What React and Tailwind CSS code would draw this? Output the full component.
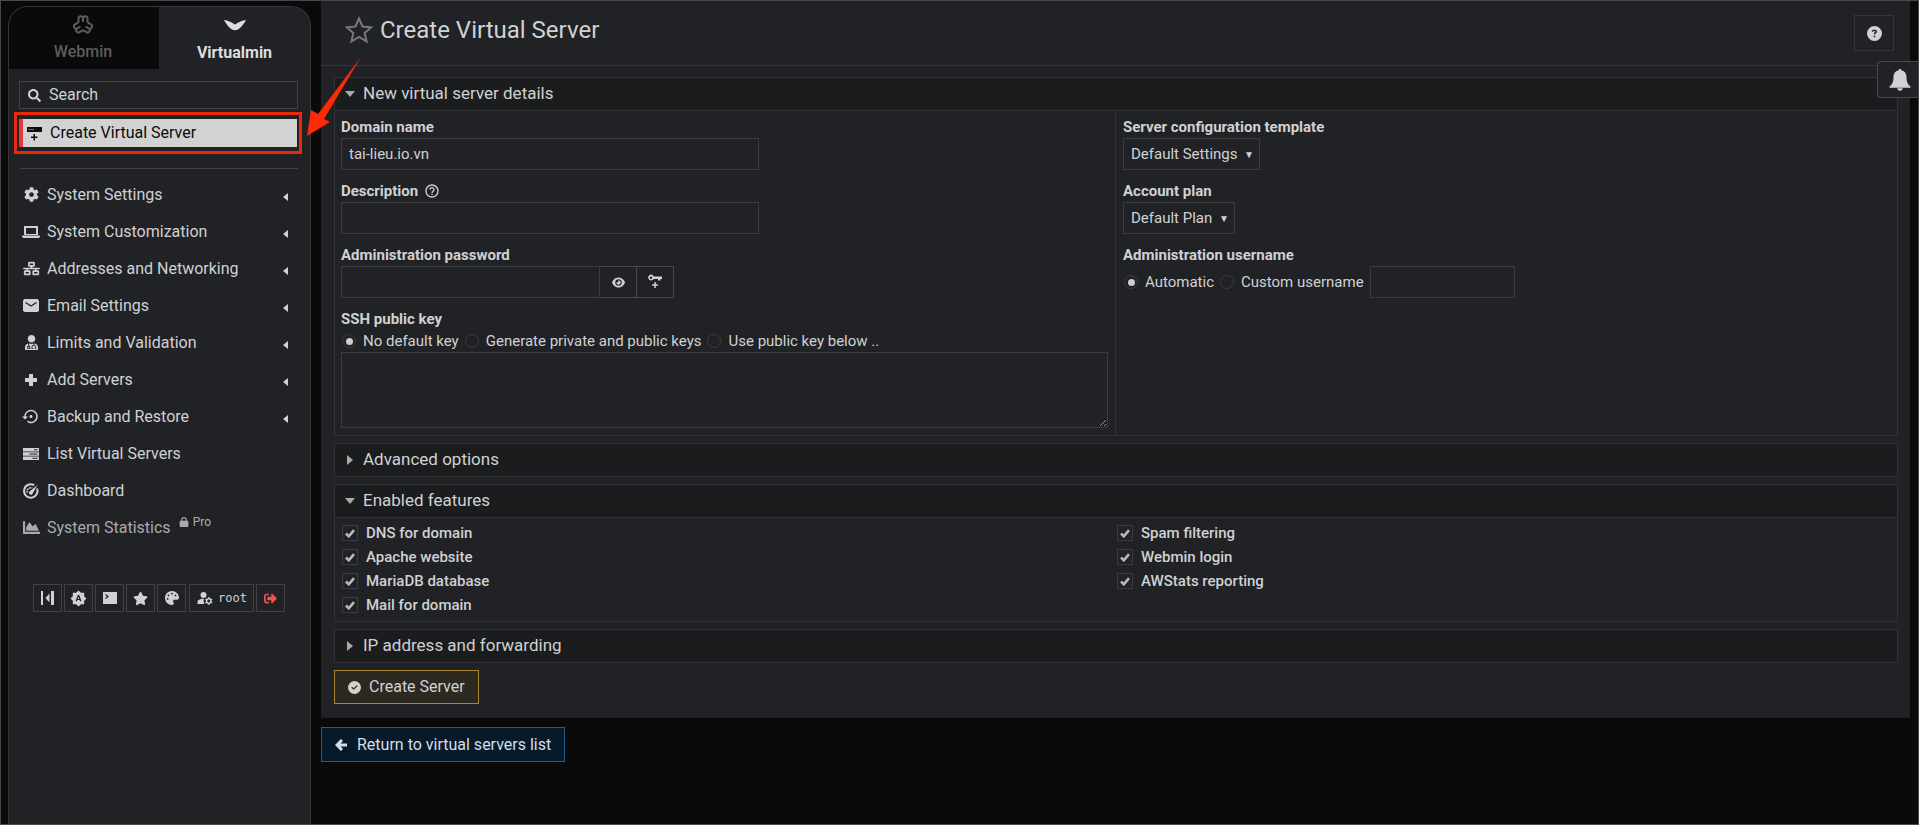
import React, { useState } from "react";
import {
  FaCircleCheck,
  FaCircleQuestion,
  FaEye,
  FaLock,
  FaNetworkWired,
  FaPalette,
  FaStar,
} from "react-icons/fa6";
import { FaChartArea, FaCog, FaSearch, FaSignOutAlt, FaUserMd } from "react-icons/fa";
import {
  MdBrightnessAuto,
  MdHelpOutline,
  MdManageAccounts,
  MdSettingsBackupRestore,
} from "react-icons/md";

const WebminIcon = () => (
  <svg viewBox="-10 -10 20 20" className="h-5 w-5" fill="none" stroke="currentColor" strokeWidth="2" aria-hidden="true">
    <path d="M-4.500-2.600v-4a2.250 2.250 0 0 1 4.500 0v3.600M0-3v-3.600a2.250 2.250 0 0 1 4.500 0v4" />
    <path d="M-4.500-2.600v-4a2.250 2.250 0 0 1 4.500 0v3.600M0-3v-3.600a2.250 2.250 0 0 1 4.500 0v4" transform="rotate(120)" />
    <path d="M-4.500-2.600v-4a2.250 2.250 0 0 1 4.500 0v3.600M0-3v-3.600a2.250 2.250 0 0 1 4.500 0v4" transform="rotate(240)" />
  </svg>
);

const VirtualminIcon = () => (
  <svg viewBox="0 0 22 12" className="h-3 w-[22px]" fill="currentColor" aria-hidden="true">
    <path d="M0 1c4 .5 7 1.800 11 4.500C15 2.800 18 1.500 22 1c-2 4-5.500 8-8 9.500-2 1-4 1-6 0C5.500 9 2 5 0 1z" />
  </svg>
);

const ServerPlusIcon = () => (
  <svg viewBox="0 0 15 15" className="h-[15px] w-[15px]" fill="currentColor" aria-hidden="true">
    <path fillRule="evenodd" d="M0 1h15v5H0zM1.500 3v1h1V3zM3.500 3v1h1V3zM5.500 3v1h1V3z" />
    <path d="M6.500 8H8v2.500h2.500V12H8v2.500H6.500V12H4v-1.500h2.500z" />
  </svg>
);

const LaptopIcon = () => (
  <svg viewBox="0 0 18 12" className="h-3 w-[18px]" fill="currentColor" aria-hidden="true">
    <path fillRule="evenodd" d="M2 0h14v9H2zM4 2v6h10V2zM0 9.500h18v1L17 12H1l-1-1.500z" />
  </svg>
);

const MailIcon = () => (
  <svg viewBox="0 0 16 13" className="h-[13px] w-4" aria-hidden="true">
    <path d="M1.500 0h13L16 1.500v10L14.500 13h-13L0 11.500v-10z" fill="currentColor" />
    <path d="m2.500 3.500 5.500 3.500 5.500-3.500" fill="none" stroke="#202226" strokeWidth="1.200" />
  </svg>
);

const PlusIcon = () => (
  <svg viewBox="0 0 14 14" className="h-[14px] w-[14px]" fill="currentColor" aria-hidden="true">
    <path d="M5 1h4v4h4v4H9v4H5V9H1V5h4z" />
  </svg>
);

const ServersIcon = () => (
  <svg viewBox="0 0 16 14" className="h-[14px] w-4" fill="currentColor" aria-hidden="true">
    <path fillRule="evenodd" d="M0 1h16v3.500H0zM11 2.200v1h3.500v-1zM0 5.300h16v3.500H0zM6.500 6.500v1h8v-1zM0 9.600h16v3.500H0zM9.500 10.800v1h5v-1z" />
  </svg>
);

const GaugeIcon = () => (
  <svg viewBox="0 0 16 16" className="h-4 w-4" fill="none" stroke="currentColor" aria-hidden="true">
    <path d="M14 5.500A6.700 6.700 0 1 1 11.200 2.200" strokeWidth="2" />
    <path d="M4.200 9.500a4 4 0 0 1 5-4.700" strokeWidth="1.500" strokeDasharray="1.800 .7" />
    <path d="M14.500 2 9.800 10.300A2 2 0 1 1 7 8z" fill="currentColor" stroke="none" />
  </svg>
);

const KeyPlusIcon = () => (
  <svg viewBox="0 0 16 16" className="h-4 w-4" fill="currentColor" aria-hidden="true">
    <path fillRule="evenodd" d="M4 .5a3 3 0 0 1 2.800 2H15V5h-1.500v1.500H11V5H6.800A3 3 0 1 1 4 .5zm0 2a1.200 1.200 0 1 0 0 2.400 1.200 1.200 0 0 0 0-2.400z" />
    <path d="M7.300 8h1.500v2.200H11v1.500H8.800v2.200H7.300v-2.200H5.100v-1.500h2.200z" />
  </svg>
);

const CollapseIcon = () => (
  <svg viewBox="0 0 14 14" className="h-[14px] w-[14px]" fill="currentColor" aria-hidden="true">
    <path d="M0 0h2v14H0zM10 0h3v14h-3zM8.500 2.500v9L4.500 7z" />
  </svg>
);

const TerminalIcon = () => (
  <svg viewBox="0 0 14 12" className="h-3 w-[14px]" aria-hidden="true">
    <path d="M0 0h14v12H0z" fill="currentColor" />
    <path d="m2.500 2.500 2.500 2-2.500 2" fill="none" stroke="#202226" strokeWidth="1.200" />
  </svg>
);

const BackIcon = () => (
  <svg viewBox="0 0 12 12" className="h-3 w-3" fill="none" stroke="currentColor" strokeWidth="3" aria-hidden="true">
    <path d="M12 6H2.500M7 1 2 6l5 5" />
  </svg>
);

const BellIcon = () => (
  <svg viewBox="0 0 22 22" className="h-[22px] w-[22px]" fill="currentColor" aria-hidden="true">
    <path d="M11 0a1.500 1.500 0 0 1 1.500 1.600C16 2.300 17.500 5 17.500 8c0 5 1.500 7.500 4 9.500v1.200H.5v-1.200c2.500-2 4-4.500 4-9.500 0-3 1.500-5.700 5-6.400A1.500 1.500 0 0 1 11 0zM8.300 19.200h5.400a2.700 2.500 0 0 1-5.400 0z" />
  </svg>
);

const menu = [
  { label: "System Settings", icon: <FaCog size={15} />, sub: true },
  { label: "System Customization", icon: <LaptopIcon />, sub: true },
  { label: "Addresses and Networking", icon: <FaNetworkWired size={17} />, sub: true },
  { label: "Email Settings", icon: <MailIcon />, sub: true },
  { label: "Limits and Validation", icon: <FaUserMd size={15} />, sub: true },
  { label: "Add Servers", icon: <PlusIcon />, sub: true },
  { label: "Backup and Restore", icon: <MdSettingsBackupRestore size={19} />, sub: true },
  { label: "List Virtual Servers", icon: <ServersIcon /> },
  { label: "Dashboard", icon: <GaugeIcon /> },
  { label: "System Statistics", icon: <FaChartArea size={17} />, pro: true },
];

const tools = [
  { label: "Collapse menu", icon: <CollapseIcon /> },
  { label: "Night mode", icon: <MdBrightnessAuto size={17} /> },
  { label: "Terminal", icon: <TerminalIcon /> },
  { label: "Favorites", icon: <FaStar size={15} /> },
  { label: "Theme", icon: <FaPalette size={14} /> },
];

function Sidebar() {
  return (
    <aside className="mt-[5px] ml-[7px] flex w-[303px] shrink-0 flex-col overflow-hidden rounded-t-[20px] border border-b-0 border-[#34363a] bg-[#202226]">
      <div className="flex h-[62px]">
        <button className="flex w-[150px] flex-col items-center bg-[#0a0a0a] pt-2 pr-[2px] font-medium text-[#5c5d5e]">
          <WebminIcon />
          <span className="mt-[5px]">Webmin</span>
        </button>
        <button className="flex flex-1 flex-col items-center pt-3 font-bold text-[#dcdddf]">
          <VirtualminIcon />
          <span className="mt-[10px]">Virtualmin</span>
        </button>
      </div>

      <div className="mt-3 mr-3 ml-[10px] flex h-[28px] items-center gap-2 border border-[#404246] px-2">
        <FaSearch size={13} className="shrink-0" />
        <input
          type="text"
          aria-label="Search"
          placeholder="Search"
          className="w-full min-w-0 bg-transparent outline-none placeholder:text-[#d0d1d3]"
        />
      </div>

      <div className="mt-[3px] mr-2 ml-[5px] border-3 border-[#e8290b] px-[2px] py-1">
        <a
          href="#create"
          className="flex h-7 items-center gap-2 border-l-4 border-[#e8383d] bg-[#d2d2d3] pl-1 text-[#0c0c0d]"
        >
          <ServerPlusIcon />
          Create Virtual Server
        </a>
      </div>

      <hr className="mt-[14px] mr-3 ml-[11px] border-[#404246]" />

      <nav className="mt-[7px]">
        {menu.map((item) => (
          <a
            key={item.label}
            href="#menu"
            className={`flex h-[37px] items-center pr-[22px] pl-[13px] ${item.pro ? "text-[#a9aaac]" : ""}`}
          >
            <span className="flex w-[18px] justify-center">{item.icon}</span>
            <span className="ml-[7px]">{item.label}</span>
            {item.pro && (
              <span className="mb-3 ml-2 flex items-center gap-1 text-xs">
                <FaLock size={10} />
                Pro
              </span>
            )}
            {item.sub && (
              <svg viewBox="0 0 5 8" className="mt-1 ml-auto h-2 w-[5px]" fill="currentColor" aria-hidden="true">
                <path d="M5 0v8L0 4z" />
              </svg>
            )}
          </a>
        ))}
      </nav>

      <div className="mt-[38px] ml-6 flex gap-[2px]">
        {tools.map((tool) => (
          <button
            key={tool.label}
            aria-label={tool.label}
            className="flex h-7 w-[29px] items-center justify-center border border-[#404246]"
          >
            {tool.icon}
          </button>
        ))}
        <button className="ml-[1px] flex h-7 items-center gap-1 border border-[#404246] px-[6px] font-['DejaVu_Sans_Mono',monospace] text-xs">
          <MdManageAccounts size={18} />
          root
        </button>
        <button
          aria-label="Logout"
          className="flex h-7 w-[29px] items-center justify-center border border-[#404246] text-[#e8564e]"
        >
          <FaSignOutAlt size={13} />
        </button>
      </div>
    </aside>
  );
}

function Panel({ title, open, children }) {
  return (
    <section className="border border-[#303236]">
      <button type="button" className="flex h-8 w-full items-center bg-[#1b1c1e] pl-2 text-left text-[17px]">
        <span className="mr-[7px] flex w-[13px] justify-center text-[#a9aaac]">
          <svg viewBox="0 0 10 10" className="h-[10px] w-[10px]" fill="currentColor" aria-hidden="true">
            {open ? <path d="M0 2h10L5 8z" /> : <path d="M2 0v10l6-5z" />}
          </svg>
        </span>
        {title}
      </button>
      {open && <div className="border-t border-[#303236]">{children}</div>}
    </section>
  );
}

function Radio({ name, label, ...props }) {
  return (
    <label className="flex items-center gap-[7px]">
      <input
        type="radio"
        name={name}
        className="flex h-[14px] w-[14px] appearance-none items-center justify-center rounded-full border border-[#3a3c40] before:h-[7px] before:w-[7px] before:rounded-full checked:before:bg-[#cdced0]"
        {...props}
      />
      {label}
    </label>
  );
}

function Select({ id, value }) {
  return (
    <div className="grid h-8 w-fit items-center">
      <select
        id={id}
        className="col-start-1 row-start-1 h-8 appearance-none border border-[#3a3c40] bg-[#202226] pr-[21px] pl-[7px] outline-none"
      >
        <option>{value}</option>
      </select>
      <span className="pointer-events-none col-start-1 row-start-1 mr-[6px] justify-self-end text-[10px]">▼</span>
    </div>
  );
}

function Feature({ label }) {
  const [on, setOn] = useState(true);

  return (
    <label className="flex h-6 items-center gap-2 font-medium">
      <span className="grid h-4 w-4 place-items-center">
        <input
          type="checkbox"
          checked={on}
          onChange={() => setOn(!on)}
          className="col-start-1 row-start-1 h-4 w-4 appearance-none border border-[#3a3c40]"
        />
        {on && (
          <svg viewBox="0 0 10 9" className="pointer-events-none col-start-1 row-start-1 h-[9px] w-[10px]" aria-hidden="true">
            <path d="m1 4.500 2.800 2.800L9 1.200" fill="none" stroke="#b9babc" strokeWidth="2.600" />
          </svg>
        )}
      </span>
      {label}
    </label>
  );
}

function ServerDetails() {
  const labelClass = "flex h-[22px] items-center gap-[6px] font-bold";
  const inputClass = "h-8 border border-[#3a3c40] bg-transparent px-[7px] outline-none";

  return (
    <div className="grid grid-cols-2 text-[15px]">
      <div className="flex flex-col border-r border-[#303236] pt-[5px] pr-[7px] pb-[7px] pl-[6px]">
        <label htmlFor="domain" className={labelClass}>Domain name</label>
        <input id="domain" type="text" defaultValue="tai-lieu.io.vn" className={`${inputClass} w-[418px]`} />

        <label htmlFor="description" className={`${labelClass} mt-[10px]`}>
          Description <MdHelpOutline size={16} />
        </label>
        <input id="description" type="text" className={`${inputClass} w-[418px]`} />

        <label htmlFor="password" className={`${labelClass} mt-[10px]`}>Administration password</label>
        <div className="flex">
          <input id="password" type="password" className={`${inputClass} w-[259px]`} />
          <button type="button" aria-label="Show password" className="flex h-8 w-[37px] items-center justify-center border-y border-r border-[#46484c]">
            <FaEye size={13} />
          </button>
          <button type="button" aria-label="Generate password" className="flex h-8 w-[37px] items-center justify-center border-y border-r border-[#46484c]">
            <KeyPlusIcon />
          </button>
        </div>

        <label htmlFor="sshkey" className={`${labelClass} mt-[10px]`}>SSH public key</label>
        <div className="flex h-[22px] items-center gap-[6px] pl-[1px]">
          <Radio name="ssh" label="No default key" defaultChecked />
          <Radio name="ssh" label="Generate private and public keys" />
          <Radio name="ssh" label="Use public key below .." />
        </div>
        <textarea id="sshkey" className="h-[76px] w-full resize border border-[#3a3c40] bg-transparent outline-none" />
      </div>

      <div className="flex flex-col pt-[5px] pb-[7px] pl-[7px]">
        <label htmlFor="template" className={labelClass}>Server configuration template</label>
        <Select id="template" value="Default Settings" />

        <label htmlFor="plan" className={`${labelClass} mt-[10px]`}>Account plan</label>
        <Select id="plan" value="Default Plan" />

        <span className={`${labelClass} mt-[10px]`}>Administration username</span>
        <div className="flex items-center gap-[6px] pl-[1px]">
          <Radio name="username" label="Automatic" defaultChecked />
          <Radio name="username" label="Custom username" />
          <input type="text" aria-label="Custom username" className={`${inputClass} w-[145px]`} />
        </div>
      </div>
    </div>
  );
}

export default function App() {
  return (
    <div className="relative flex min-h-screen border border-[#47494b] bg-[#0a0a0a] font-[Roboto,sans-serif] text-base text-[#d0d1d3]">
      <Sidebar />

      <main className="mr-2 ml-[10px] flex-1">
        <div className="bg-[#202226] pb-[14px]">
          <header className="flex h-[65px] justify-between border-b border-[#34363a] pr-4 pl-6">
            <h1 className="flex h-[58px] items-center gap-[7px] text-2xl">
              <svg viewBox="0 0 28 28" className="h-7 w-7" fill="none" stroke="#77797c" strokeWidth="2" aria-hidden="true">
                <path d="m14 2.500 3.500 8 8.700.8-6.600 5.700 2 8.500-7.600-4.500-7.600 4.500 2-8.500L1.800 11.300l8.700-.8z" />
              </svg>
              Create Virtual Server
            </h1>
            <button aria-label="Help" className="mt-[14px] flex h-9 w-10 items-center justify-center border border-[#34363a]">
              <FaCircleQuestion size={15} />
            </button>
          </header>

          <form className="mt-[11px] mr-3 ml-[13px] flex flex-col gap-[7px]">
            <Panel title="New virtual server details" open>
              <ServerDetails />
            </Panel>

            <Panel title="Advanced options" />

            <Panel title="Enabled features" open>
              <div className="grid grid-cols-2 pt-[3px] pb-1 text-[15px]">
                <div className="pl-[7px]">
                  <Feature label="DNS for domain" />
                  <Feature label="Apache website" />
                  <Feature label="MariaDB database" />
                  <Feature label="Mail for domain" />
                </div>
                <div className="pl-[1px]">
                  <Feature label="Spam filtering" />
                  <Feature label="Webmin login" />
                  <Feature label="AWStats reporting" />
                </div>
              </div>
            </Panel>

            <Panel title="IP address and forwarding" />

            <button type="button" className="flex h-[34px] w-fit items-center gap-2 border border-[#a8842c] bg-[#2d2921] px-[13px]">
              <FaCircleCheck size={13} />
              Create Server
            </button>
          </form>
        </div>

        <a href="#list" className="mt-[9px] flex h-[35px] w-fit items-center gap-[10px] border border-[#285a87] bg-[#071a29] px-[13px] text-[#d3dfe8]">
          <BackIcon />
          Return to virtual servers list
        </a>
      </main>

      <button
        aria-label="Notifications"
        className="absolute top-[60px] right-0 flex h-[37px] w-[41px] items-center justify-center rounded-l border border-r-0 border-[#47494d] bg-[#202226] pl-1"
      >
        <BellIcon />
      </button>

      <svg viewBox="0 0 56 80" className="pointer-events-none absolute top-[56px] left-[306px] h-20 w-14" fill="#fd2a06" aria-hidden="true">
        <path d="M54 0 17 62l6 3L0 79l4-26 7 4z" />
      </svg>
    </div>
  );
}
